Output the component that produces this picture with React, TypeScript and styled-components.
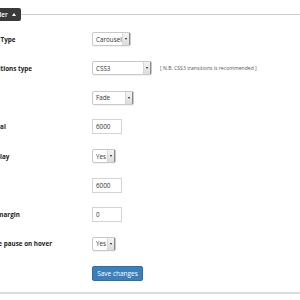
import React, { FC } from 'react';
import styled, { createGlobalStyle } from 'styled-components';

const GlobalStyle = createGlobalStyle`
  html, body {
    margin: 0;
    padding: 0;
    background: #ffffff;
    overflow: hidden;
  }
  body {
    font-family: 'Open Sans', 'Liberation Sans', sans-serif;
    color: #333333;
  }
`;

const Page = styled.div`
  width: 300px;
  height: 300px;
  overflow: hidden;
  background: #ffffff;
`;

const Header = styled.div`
  display: flex;
  align-items: center;
  margin-top: 8px;
  height: 13px;
`;

const Tab = styled.div`
  display: flex;
  align-items: center;
  gap: 4px;
  height: 13px;
  margin-left: -14px;
  padding: 0 5px 0 4px;
  background: #3a3a3a;
  border-radius: 0 2px 2px 0;
  color: #ffffff;
  font-size: 6.5px;
  font-weight: 600;
`;

const Caret = styled.span`
  width: 0;
  height: 0;
  border-left: 2.5px solid transparent;
  border-right: 2.5px solid transparent;
  border-bottom: 3px solid #ffffff;
`;

const Rule = styled.div`
  flex: 1;
  height: 1px;
  background: #cfcfcf;
`;

const Form = styled.div`
  margin-top: 3.5px;
  margin-left: -19px;
`;

const Row = styled.div`
  display: grid;
  grid-template-columns: 111px 1fr;
  align-items: center;
  height: 29.25px;
`;

const Label = styled.div`
  font-size: 6.3px;
  font-weight: 700;
  color: #222222;
  white-space: nowrap;
`;

const Field = styled.div`
  display: flex;
  align-items: center;
  gap: 8px;
`;

const Select = styled.div<{ $width: number }>`
  display: flex;
  align-items: stretch;
  width: ${(p) => p.$width}px;
  height: 14px;
  box-sizing: border-box;
  border: 1px solid #c9c9c9;
  border-radius: 2px;
  background: #ffffff;
  box-shadow: 0 1px 1px rgba(0, 0, 0, 0.06);
`;

const SelectText = styled.span`
  flex: 1;
  display: flex;
  align-items: center;
  padding-left: 3px;
  font-size: 6.3px;
  color: #333333;
`;

const SelectArrow = styled.span`
  display: flex;
  align-items: center;
  justify-content: center;
  width: 6px;
  border-left: 1px solid #d8d8d8;
  border-right: 1px solid #8a8a8a;
  background: linear-gradient(#f4f4f4, #dcdcdc);

  &::after {
    content: '';
    width: 0;
    height: 0;
    border-left: 1.5px solid transparent;
    border-right: 1.5px solid transparent;
    border-top: 2px solid #222222;
  }
`;

const TextInput = styled.div`
  display: flex;
  align-items: center;
  width: 30px;
  height: 15px;
  box-sizing: border-box;
  padding-left: 3px;
  border: 1px solid #d4d4d4;
  background: #ffffff;
  font-size: 6.3px;
  color: #333333;
`;

const Note = styled.span`
  font-size: 5.1px;
  color: #555555;
  white-space: nowrap;
`;

const SaveButton = styled.button`
  width: 51px;
  height: 15px;
  padding: 0;
  border: 1px solid #2f6fa6;
  border-radius: 2px;
  background: #3c80ba;
  color: #ffffff;
  font-family: inherit;
  font-size: 6.5px;
`;

const Bottom = styled.div`
  height: 2px;
  margin-top: 4px;
  background: #dcdcdc;
`;

const SelectBox: FC<{ width: number; value: string }> = ({ width, value }) => (
  <Select $width={width}>
    <SelectText>{value}</SelectText>
    <SelectArrow />
  </Select>
);

export default function App() {
  return (
    <Page>
      <GlobalStyle />
      <Header>
        <Tab>
          Slider
          <Caret />
        </Tab>
        <Rule />
      </Header>
      <Form>
        <Row>
          <Label>Slider Type</Label>
          <Field>
            <SelectBox width={39} value="Carousel" />
          </Field>
        </Row>
        <Row>
          <Label>Transitions type</Label>
          <Field>
            <SelectBox width={60} value="CSS3" />
            <Note>[ N.B. CSS3 transitions is recommended ]</Note>
          </Field>
        </Row>
        <Row>
          <Label>Effect</Label>
          <Field>
            <SelectBox width={42} value="Fade" />
          </Field>
        </Row>
        <Row>
          <Label>Interval</Label>
          <Field>
            <TextInput>6000</TextInput>
          </Field>
        </Row>
        <Row>
          <Label>Autoplay</Label>
          <Field>
            <SelectBox width={24} value="Yes" />
          </Field>
        </Row>
        <Row>
          <Label>Speed</Label>
          <Field>
            <TextInput>6000</TextInput>
          </Field>
        </Row>
        <Row>
          <Label>Item margin</Label>
          <Field>
            <TextInput>0</TextInput>
          </Field>
        </Row>
        <Row>
          <Label>Enable pause on hover</Label>
          <Field>
            <SelectBox width={24} value="Yes" />
          </Field>
        </Row>
        <Row>
          <span />
          <Field>
            <SaveButton>Save changes</SaveButton>
          </Field>
        </Row>
      </Form>
      <Bottom />
    </Page>
  );
}
